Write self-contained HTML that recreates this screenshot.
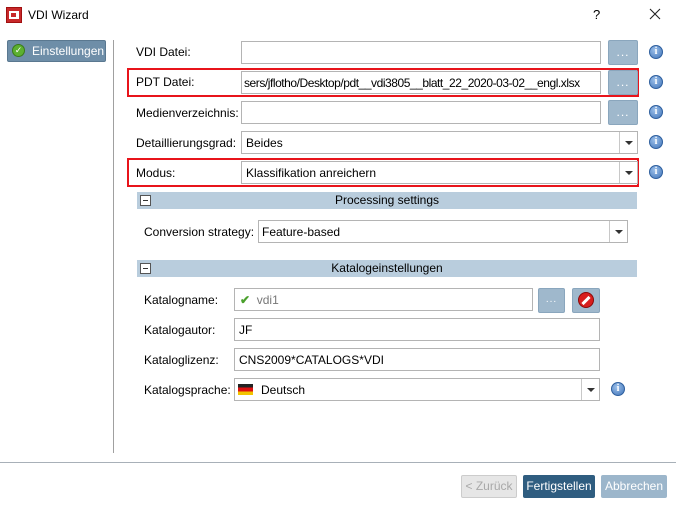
<!DOCTYPE html>
<html><head><meta charset="utf-8"><style>
*{box-sizing:border-box;margin:0;padding:0}
body{width:676px;height:508px;background:#fff;font-family:"Liberation Sans",sans-serif;font-size:12px;color:#000;position:relative;overflow:hidden}
.a{position:absolute}
.lbl{position:absolute;font-size:12px;line-height:14px}
.in{position:absolute;border:1px solid #b4b4b4;background:#fff;height:23px;padding-left:4px;line-height:22px;font-size:12px;white-space:nowrap;overflow:hidden}
.btn{position:absolute;background:#9fb8cc;border:1px solid #8aa6bd;border-radius:2px;height:25px;color:#fff;text-align:center;line-height:22px;font-size:12px;letter-spacing:1px}
.info{position:absolute;width:14px;height:14px;border-radius:50%;background:radial-gradient(circle at 40% 35%,#9cc0ea,#3f73b8);border:1px solid #2e5f9e;color:#fff;font-size:10px;font-weight:bold;text-align:center;line-height:12px;font-family:"Liberation Serif",serif}
.red{position:absolute;border:2px solid #e8141b}
.dd{position:absolute;right:0;top:0;width:18px;height:21px;border-left:1px solid #c8c8c8}
.dd:after{content:"";position:absolute;left:5px;top:9px;border-left:4px solid transparent;border-right:4px solid transparent;border-top:4px solid #333}
.hdr{position:absolute;left:137px;width:500px;height:17px;background:#b9cddd;text-align:center;line-height:17px;font-size:12px}
.hdr .m{position:absolute;left:3px;top:3px;width:11px;height:11px;border:1px solid #555;background:#fff}
.hdr .m:after{content:"";position:absolute;left:2px;top:4px;width:5px;height:1px;background:#333}
</style></head><body>
<div class="a" style="left:6px;top:7px;width:16px;height:16px;background:#c8282a;border:1px solid #a01010"><div class="a" style="left:2px;top:3px;width:10px;height:8px;background:#fff"></div><div class="a" style="left:4px;top:5px;width:5px;height:4px;background:#c8282a"></div></div>
<div class="lbl" style="left:28px;top:8px">VDI Wizard</div>
<div class="lbl" style="left:593px;top:8px;font-size:13px">?</div>
<svg class="a" style="left:649px;top:8px" width="12" height="12" viewBox="0 0 12 12"><path d="M1 1L11 11M11 1L1 11" stroke="#222" stroke-width="1.1"/></svg>

<div class="a" style="left:7px;top:40px;width:99px;height:22px;background:#6e8ea8;border:1px solid #5a7890;border-radius:2px;color:#fff;line-height:20px;padding-left:24px">Einstellungen</div>
<div class="a" style="left:12px;top:44px;width:13px;height:13px;border-radius:50%;background:#5cb030;border:1px solid #3a7a1a;color:#fff;font-size:9px;line-height:11px;text-align:center">✓</div>
<div class="a" style="left:113px;top:40px;width:1px;height:413px;background:#a0a0a0"></div>

<div class="lbl" style="left:136px;top:45px">VDI Datei:</div>
<div class="in" style="left:241px;top:41px;width:360px"></div>
<div class="btn" style="left:608px;top:40px;width:30px">...</div>
<div class="info" style="left:649px;top:45px">i</div>

<div class="red" style="left:127px;top:68px;width:512px;height:29px"></div>
<div class="lbl" style="left:136px;top:75px">PDT Datei:</div>
<div class="in" style="left:241px;top:71px;width:360px;padding-left:2px;letter-spacing:-0.45px">sers/jflotho/Desktop/pdt__vdi3805__blatt_22_2020-03-02__engl.xlsx</div>
<div class="btn" style="left:608px;top:70px;width:30px">...</div>
<div class="info" style="left:649px;top:75px">i</div>

<div class="lbl" style="left:136px;top:106px">Medienverzeichnis:</div>
<div class="in" style="left:241px;top:101px;width:360px"></div>
<div class="btn" style="left:608px;top:100px;width:30px">...</div>
<div class="info" style="left:649px;top:105px">i</div>

<div class="lbl" style="left:136px;top:136px">Detaillierungsgrad:</div>
<div class="in" style="left:241px;top:131px;width:397px">Beides<div class="dd"></div></div>
<div class="info" style="left:649px;top:135px">i</div>

<div class="red" style="left:127px;top:158px;width:512px;height:29px"></div>
<div class="lbl" style="left:136px;top:166px">Modus:</div>
<div class="in" style="left:241px;top:161px;width:397px">Klassifikation anreichern<div class="dd"></div></div>
<div class="info" style="left:649px;top:165px">i</div>

<div class="hdr" style="top:192px"><div class="m"></div>Processing settings</div>
<div class="lbl" style="left:144px;top:225px">Conversion strategy:</div>
<div class="in" style="left:258px;top:220px;width:370px;padding-left:3px">Feature-based<div class="dd"></div></div>

<div class="hdr" style="top:260px"><div class="m"></div>Katalogeinstellungen</div>

<div class="lbl" style="left:144px;top:293px">Katalogname:</div>
<div class="in" style="left:234px;top:288px;width:299px;color:#777;padding-left:5px"><span style="color:#4aa02c;font-weight:bold">✔</span>&nbsp;&nbsp;vdi1</div>
<div class="btn" style="left:538px;top:288px;width:27px;font-size:10px">...</div>
<div class="btn" style="left:572px;top:288px;width:28px"></div>
<div class="a" style="left:578px;top:292px;width:16px;height:16px;border-radius:50%;background:#d81e1e;border:1px solid #8a0a0a"><div class="a" style="left:2px;top:6px;width:10px;height:3px;background:#fff;transform:rotate(-45deg)"></div></div>

<div class="lbl" style="left:144px;top:323px">Katalogautor:</div>
<div class="in" style="left:234px;top:318px;width:366px">JF</div>
<div class="lbl" style="left:144px;top:353px">Kataloglizenz:</div>
<div class="in" style="left:234px;top:348px;width:366px">CNS2009*CATALOGS*VDI</div>
<div class="lbl" style="left:144px;top:383px">Katalogsprache:</div>
<div class="in" style="left:234px;top:378px;width:366px;padding-left:3px"><span style="display:inline-block;width:15px;height:11px;vertical-align:-1px;background:linear-gradient(#222 0 33%,#d11 33% 66%,#f2c500 66%);margin-right:8px"></span>Deutsch<div class="dd"></div></div>
<div class="info" style="left:611px;top:382px">i</div>

<div class="a" style="left:0;top:462px;width:676px;height:1px;background:#a8b0b8"></div>
<div class="a" style="left:461px;top:475px;width:56px;height:23px;border:1px solid #ccc;background:#e6e6e6;color:#a8a8a8;text-align:center;line-height:21px;border-radius:2px">&lt; Zurück</div>
<div class="a" style="left:523px;top:475px;width:72px;height:23px;background:#2f5d80;color:#fff;text-align:center;line-height:23px;border-radius:2px">Fertigstellen</div>
<div class="a" style="left:601px;top:475px;width:66px;height:23px;background:#9cb6cb;color:#fff;text-align:center;line-height:23px;border-radius:2px">Abbrechen</div>
</body></html>
